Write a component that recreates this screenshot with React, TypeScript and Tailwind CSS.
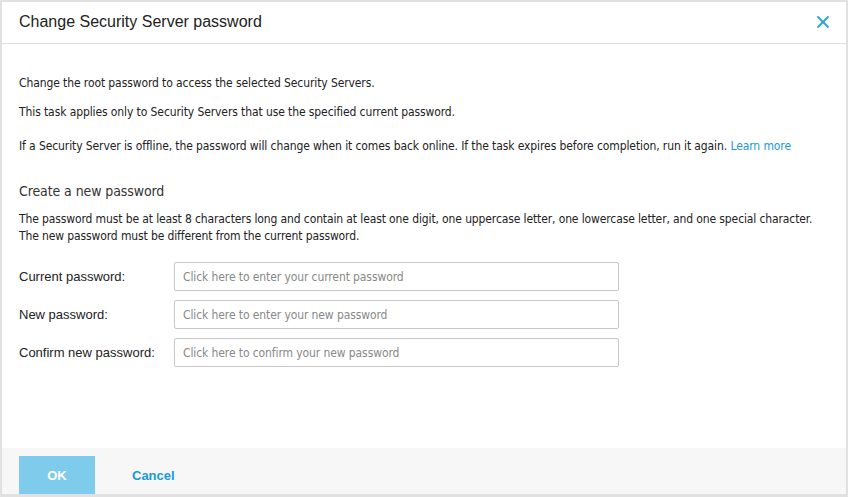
import { X } from "lucide-react";

const fields = [
  { label: "Current password:", placeholder: "Click here to enter your current password" },
  { label: "New password:", placeholder: "Click here to enter your new password" },
  { label: "Confirm new password:", placeholder: "Click here to confirm your new password" },
];

const body = { fontFamily: "Tahoma, 'DejaVu Sans Condensed', 'DejaVu Sans', sans-serif" };
const arial = { fontFamily: "'Liberation Sans', Arial, sans-serif" };

export default function App() {
  return (
    <div className="w-[848px] h-[497px] bg-[#e1e1e1] p-[2px] pb-[3px]">
      <div className="w-full h-full bg-white flex flex-col">
        {/* Header */}
        <div className="h-[42px] shrink-0 flex items-center justify-between pl-[17px] pr-[13px] border-b border-[#dcdcdc]">
          <h1 className="text-[16px] text-[#222] mt-[-2px]" style={arial}>
            Change Security Server password
          </h1>
          <X size={20} strokeWidth={2.2} className="text-[#2ba5dd] mt-[-1px]" />
        </div>

        {/* Content */}
        <div className="flex-1 pl-[17px] pr-[2px] pt-[31px] text-[12px] text-[#222] tracking-[-0.1px]" style={body}>
          <p className="leading-[16px]">Change the root password to access the selected Security Servers.</p>
          <p className="leading-[16px] mt-[13px]">This task applies only to Security Servers that use the specified current password.</p>
          <p className="leading-[16px] mt-[18px]">
            If a Security Server is offline, the password will change when it comes back online. If the task expires before completion, run it again.{" "}
            <a className="text-[#1a9ad6]">Learn more</a>
          </p>

          <h2 className="text-[14px] leading-[18px] mt-[28px] text-[#333]">Create a new password</h2>
          <p className="leading-[17px] mt-[11px] whitespace-nowrap tracking-[-0.12px]">
            The password must be at least 8 characters long and contain at least one digit, one uppercase letter, one lowercase letter, and one special character.
            <br />
            The new password must be different from the current password.
          </p>

          <div className="mt-[17px] flex flex-col gap-[9px] tracking-normal" style={arial}>
            {fields.map((f) => (
              <div key={f.label} className="flex items-center">
                <label className="w-[155px] text-[13px] text-[#222]">{f.label}</label>
                <input
                  type="password"
                  placeholder={f.placeholder}
                  className="w-[445px] h-[29px] border border-[#c8c8c8] rounded-[2px] px-[8px] text-[12px] tracking-[-0.1px] placeholder:text-[#888] outline-none"
                  style={body}
                />
              </div>
            ))}
          </div>
        </div>

        {/* Footer */}
        <div className="h-[46px] shrink-0 bg-[#f7f7f7] flex items-end pl-[17px]" style={arial}>
          <button className="w-[76px] h-[38px] bg-[#7fcbec] text-white font-bold text-[13px] pt-[1px]">OK</button>
          <button className="ml-[37px] h-[38px] text-[#1a9ad6] font-bold text-[13px] pt-[1px]">Cancel</button>
        </div>
      </div>
    </div>
  );
}
